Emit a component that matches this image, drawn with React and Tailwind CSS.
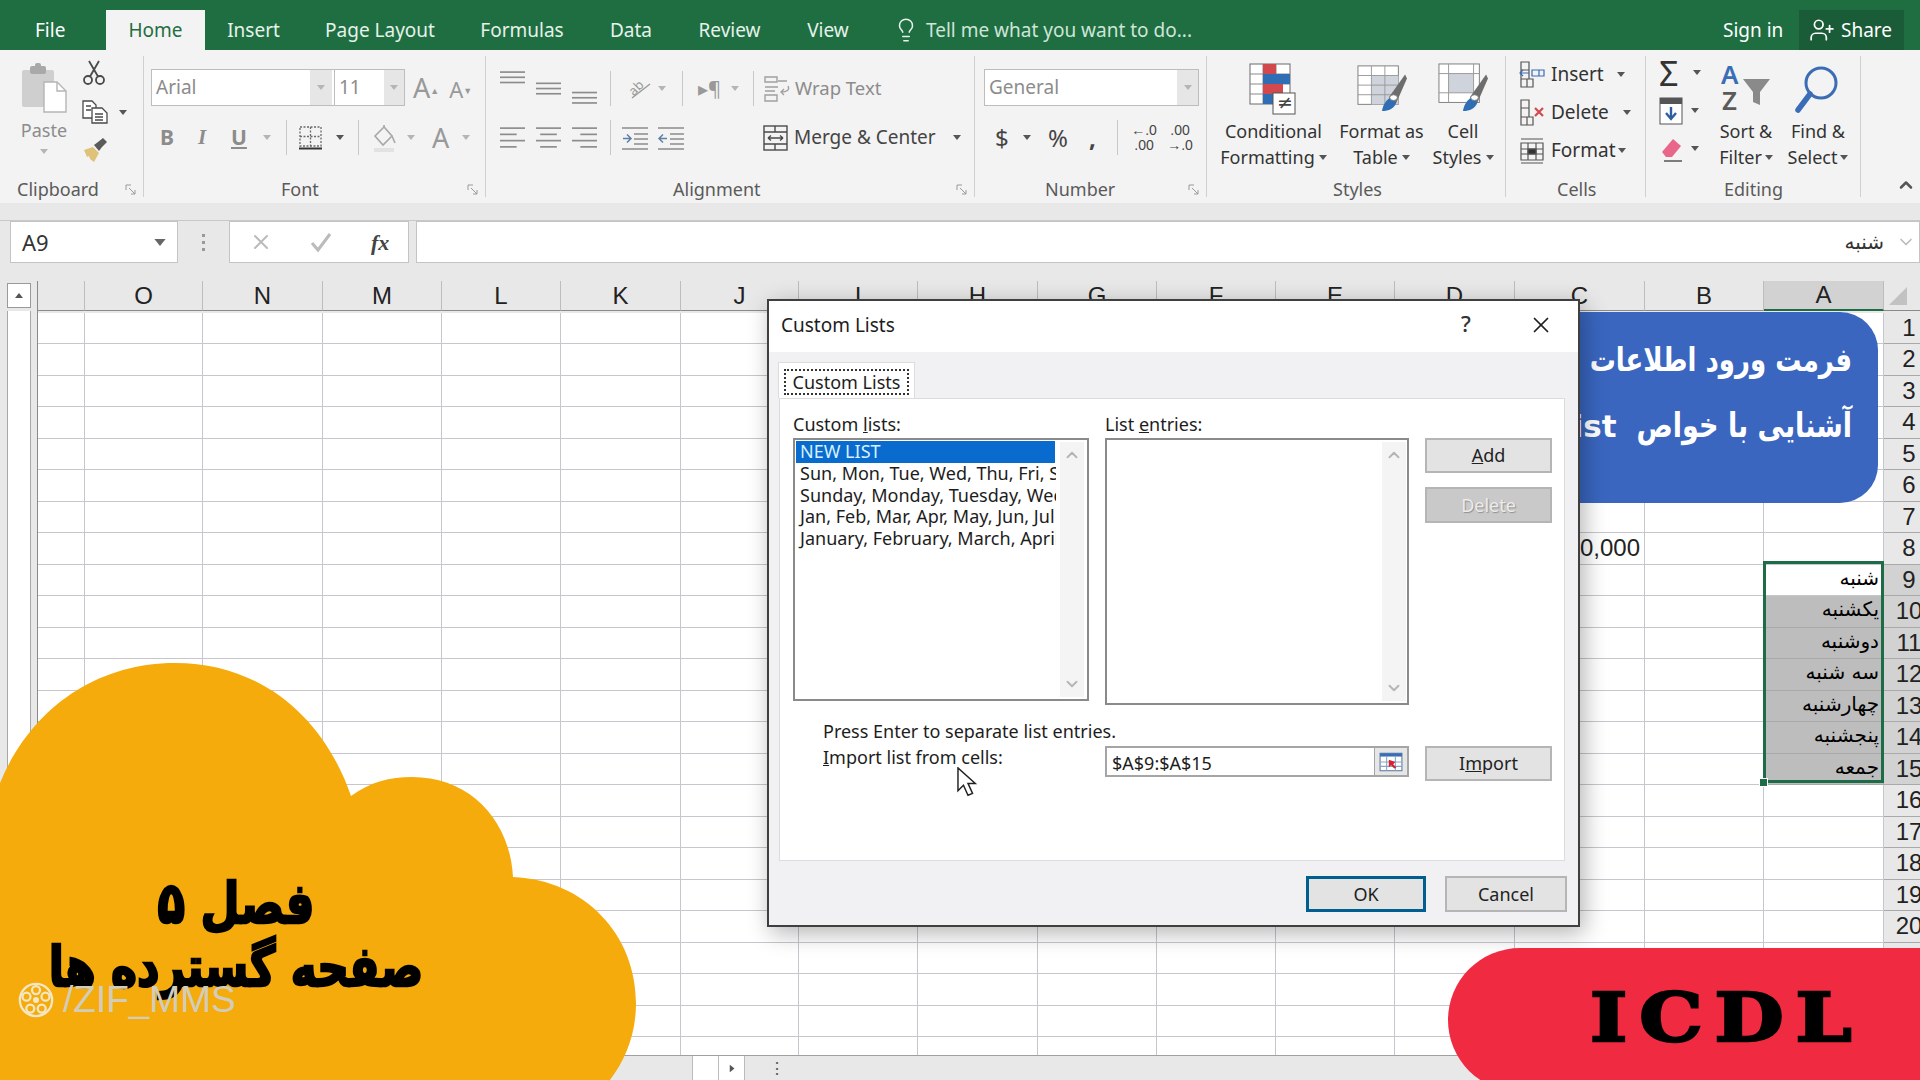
import { ChevronUp, ChevronDown, X, Lightbulb, UserPlus } from "lucide-react";

const columns = ["", "O", "N", "M", "L", "K", "J", "I", "H", "G", "F", "E", "D", "C", "B", "A"];
const days = ["شنبه", "یکشنبه", "دوشنبه", "سه شنبه", "چهارشنبه", "پنجشنبه", "جمعه"];
const rows = Array.from({ length: 24 }, (_, i) => i + 1);
const listItems = [
  "Sun, Mon, Tue, Wed, Thu, Fri, Sat",
  "Sunday, Monday, Tuesday, Wednesday",
  "Jan, Feb, Mar, Apr, May, Jun, Jul",
  "January, February, March, April",
];

const Caret = ({ className = "" }) => (
  <svg viewBox="0 0 8 5" className={`w-[8px] h-[5px] shrink-0 ${className}`}>
    <path d="M0 0h8L4 5z" fill="currentColor" />
  </svg>
);

const Lines = ({ data, className = "", color = "#8c8c8c" }) => (
  <svg viewBox="0 0 24 24" className={`w-[25px] h-[25px] shrink-0 ${className}`} fill="none" stroke={color} strokeWidth="1.6">
    {data.map(([a, b, y], i) => (
      <path key={i} d={`M${a} ${y}H${b}`} />
    ))}
  </svg>
);

const Launcher = () => (
  <svg viewBox="0 0 12 12" className="absolute right-[6px] bottom-[1px] w-[12px] h-[12px]" fill="none" stroke="#9a9a9a">
    <path d="M1 6V1h5M4 4l6 6M6 10h4V6" />
  </svg>
);

const Group = ({ width, label, labelPad, launcher, children }) => (
  <div className={`relative my-[6px] h-[141px] border-r border-[#d0d0d0] shrink-0 ${width}`}>
    {children}
    <div className={`absolute bottom-0 left-0 text-[18px] leading-[16px] text-[#5a5a5a] whitespace-nowrap ${labelPad}`}>{label}</div>
    {launcher && <Launcher />}
  </div>
);

const PasteIcon = () => (
  <svg viewBox="0 0 46 50" className="w-[46px] h-[50px]">
    <rect x="1" y="7" width="32" height="37" rx="2" fill="#cfcfcf" />
    <rect x="9" y="3" width="16" height="8" rx="2" fill="#a9a9a9" />
    <rect x="14" y="0" width="6" height="6" rx="2" fill="#a9a9a9" />
    <path d="M23 19h13l9 9v21H23z" fill="#fff" stroke="#b5b5b5" strokeWidth="1.4" />
    <path d="M36 19v9h9" fill="none" stroke="#b5b5b5" strokeWidth="1.4" />
  </svg>
);

const ScissorsIcon = () => (
  <svg viewBox="0 0 24 26" className="w-[24px] h-[26px]" fill="none" stroke="#4a4a4a" strokeWidth="1.8">
    <circle cx="6" cy="20" r="4" />
    <circle cx="18" cy="20" r="4" />
    <path d="M8 16.5 17 1M16 16.5 7 1" />
  </svg>
);

const CopyIcon = () => (
  <svg viewBox="0 0 26 24" className="w-[26px] h-[24px]" fill="#fff" stroke="#4a4a4a" strokeWidth="1.3">
    <path d="M1 1h9l4 4v13H1z" />
    <path d="M10 8h10l5 5v10H10z" />
    <path d="M4 6h5M4 10h5M13 14h8M13 17h8M13 20h8" />
  </svg>
);

const BrushIcon = () => (
  <svg viewBox="0 0 26 24" className="w-[26px] h-[24px]">
    <path d="M2 12l9-3 6 6-5 9-4-3-1-3-2 1z" fill="#dfc27a" />
    <path d="M12 7l4-3 5-4 4 4-5 5-3 4z" fill="#5a5a5a" />
  </svg>
);

const BorderIcon = () => (
  <svg viewBox="0 0 24 24" className="w-[24px] h-[24px]" fill="none" stroke="#6a6a6a" strokeWidth="1.3" strokeDasharray="2 1.5">
    <rect x="1" y="1" width="21" height="19" />
    <path d="M11.5 1v19M1 10.5h21" />
    <path d="M0 22.5h23" strokeDasharray="none" strokeWidth="2" stroke="#333" />
  </svg>
);

const FillIcon = () => (
  <svg viewBox="0 0 26 28" className="w-[26px] h-[28px]" fill="none" stroke="#a8a8a8" strokeWidth="1.6">
    <path d="M12 3 3 12l8 9 9-9z" />
    <path d="M12 3V1M20 12l3 7" />
    <rect x="2" y="24" width="20" height="4" fill="#e2e2e2" stroke="none" />
  </svg>
);

const OrientationIcon = () => (
  <svg viewBox="0 0 26 26" className="w-[26px] h-[26px]">
    <text x="3" y="15" fontSize="13" fill="#9a9a9a" transform="rotate(-45 12 12)" fontFamily="Noto Sans">ab</text>
    <path d="M6 22 24 8" stroke="#9a9a9a" strokeWidth="1.4" />
  </svg>
);

const IndentIcon = ({ flip }) => (
  <svg viewBox="0 0 28 24" className="w-[28px] h-[24px]" fill="none" stroke="#8c8c8c" strokeWidth="1.5">
    <path d="M1 2h26M13 8h14M13 13h14M13 18h14M1 23h26" />
    <path d={flip ? "M10 12.5H2M6 8.5l-4 4 4 4" : "M2 12.5h8M6 8.5l4 4-4 4"} stroke="#5d7fa8" />
  </svg>
);

const WrapIcon = () => (
  <svg viewBox="0 0 26 26" className="w-[26px] h-[26px]" fill="none" stroke="#a0a0a0" strokeWidth="1.4">
    <path d="M1 1h12v5H1zM1 11h13M1 15h10M1 19h12v6H1zM14 5h9" />
    <path d="M24 10c2 4-1 6-7 6M20 13l-3 3 3 3" />
  </svg>
);

const MergeIcon = () => (
  <svg viewBox="0 0 25 26" className="w-[25px] h-[26px]" fill="none" stroke="#4a4a4a" strokeWidth="1.4">
    <rect x="1" y="1" width="23" height="24" />
    <path d="M1 7h23M1 19h23M12 1v6M12 19v6M5 13h15M5 13l3-2.5M5 13l3 2.5M20 13l-3-2.5M20 13l-3 2.5" />
  </svg>
);

const ConditionalIcon = () => (
  <svg viewBox="0 0 50 52" className="w-[50px] h-[52px]">
    <rect x="1" y="1" width="40" height="40" fill="#fff" stroke="#6a6a6a" />
    <path d="M14 1v40M27 1v40M1 11h40M1 21h40M1 31h40" stroke="#8a8a8a" />
    <rect x="14" y="1" width="13" height="10" fill="#d2494d" />
    <rect x="14" y="11" width="27" height="10" fill="#2f6db5" />
    <rect x="14" y="21" width="20" height="10" fill="#d2494d" />
    <rect x="14" y="31" width="13" height="10" fill="#2f6db5" />
    <rect x="24" y="30" width="22" height="21" fill="#fff" stroke="#555" />
    <text x="28" y="46" fontSize="19" fill="#444" fontFamily="DejaVu Sans">≠</text>
  </svg>
);

const StyleBrush = () => (
  <>
    <path d="M33 36 50 12l2 4-11 25z" fill="#6d6d6d" />
    <path d="M26 50c1-7 5-12 9-14l6 5c-2 6-8 9-15 9z" fill="#2f6db5" />
    <ellipse cx="38" cy="36" rx="4" ry="3" fill="#fff" stroke="#777" />
  </>
);

const TableIcon = () => (
  <svg viewBox="0 0 52 52" className="w-[52px] h-[50px]">
    <rect x="1" y="3" width="42" height="40" fill="#fff" stroke="#7d7d7d" />
    <rect x="15" y="13" width="28" height="30" fill="#cfd3dc" />
    <path d="M15 3v40M29 3v40M1 13h42M1 23h42M1 33h42" stroke="#9a9a9a" />
    <StyleBrush />
  </svg>
);

const CellStylesIcon = () => (
  <svg viewBox="0 0 52 52" className="w-[52px] h-[50px]">
    <rect x="1" y="1" width="42" height="40" fill="#fff" stroke="#7d7d7d" />
    <rect x="11" y="11" width="26" height="20" fill="#cfd3dc" />
    <path d="M11 1v40M37 1v40M1 11h42M1 31h42" stroke="#9a9a9a" />
    <StyleBrush />
  </svg>
);

const CellGrid = ({ children }) => (
  <svg viewBox="0 0 27 27" className="w-[27px] h-[27px] shrink-0" fill="none" stroke="#555" strokeWidth="1.2">
    <path d="M2 1h8v8H2zM2 18h12v8H2zM8 18v8M2 9v9M10 9v9" />
    {children}
  </svg>
);

const SortIcon = () => (
  <svg viewBox="0 0 50 48" className="w-[50px] h-[48px]">
    <text x="0" y="21" fontSize="26" fontWeight="600" fontFamily="Noto Sans" fill="#3a6db5">A</text>
    <text x="1" y="47" fontSize="26" fontWeight="600" fontFamily="Noto Sans" fill="#5a5a5a">Z</text>
    <path d="M22 16h27L39 29v13l-7-3V29z" fill="#8a8a8a" />
  </svg>
);

const FindIcon = () => (
  <svg viewBox="0 0 46 54" className="w-[46px] h-[54px]" fill="none">
    <circle cx="26" cy="20" r="15" stroke="#3a6db5" strokeWidth="3" />
    <path d="M15 31 3 47" stroke="#3a6db5" strokeWidth="5.5" strokeLinecap="round" />
  </svg>
);

const ReelIcon = () => (
  <svg viewBox="0 0 40 40" className="w-[38px] h-[40px] shrink-0" fill="none" stroke="#f3e7c4" strokeWidth="2.4">
    <circle cx="20" cy="20" r="17" />
    <circle cx="20" cy="20" r="2" fill="#f3e7c4" />
    <circle cx="20" cy="9.5" r="4.2" />
    <circle cx="30" cy="16.5" r="4.2" />
    <circle cx="26" cy="29" r="4.2" />
    <circle cx="14" cy="29" r="4.2" />
    <circle cx="10" cy="16.5" r="4.2" />
  </svg>
);

const DialogButton = ({ children, className = "bg-[#e3e3e3] text-[#222]" }) => (
  <div className={`flex items-center justify-center border-2 border-[#b5b5b5] text-[18px] ${className}`}>{children}</div>
);

const ListScroll = ({ className = "" }) => (
  <div className={`w-[24px] self-stretch my-[2px] bg-[#f4f4f4] flex flex-col justify-between items-center py-[4px] text-[#b5b5b5] ${className}`}>
    <ChevronUp size={18} strokeWidth={2.5} />
    <ChevronDown size={18} strokeWidth={2.5} />
  </div>
);

const Ribbon = () => (
  <div className="flex h-[153px] bg-[#f3f3f3] text-[#5a5a5a]">
    <Group width="w-[144px]" label="Clipboard" labelPad="pl-[17px]" launcher>
      <div className="flex pl-[19px] pt-[7px]">
        <div className="flex flex-col items-center w-[50px]">
          <PasteIcon />
          <span className="mt-[5px] text-[18px] leading-[24px] text-[#8c8c8c]">Paste</span>
          <Caret className="mt-[7px] text-[#b5b5b5]" />
        </div>
        <div className="ml-[13px] flex flex-col gap-[14px] -mt-[3px]">
          <ScissorsIcon />
          <div className="flex items-center gap-[11px]">
            <CopyIcon />
            <Caret className="text-[#555]" />
          </div>
          <BrushIcon />
        </div>
      </div>
    </Group>

    <Group width="w-[342px]" label="Font" labelPad="pl-[137px]" launcher>
      <div className="flex items-center pl-[7px] pt-[13px]">
        <div className="flex w-[254px] h-[37px] border border-[#bdbdbd] bg-white text-[19px] text-[#8c8c8c]">
          <div className="w-[158px] pl-[4px] leading-[35px]">Arial</div>
          <div className="w-[22px] bg-[#e6e6e6] flex items-center justify-center text-[#b5b5b5]"><Caret /></div>
          <div className="w-[50px] ml-[2px] pl-[4px] leading-[35px] border-l border-[#bdbdbd]">11</div>
          <div className="flex-1 bg-[#e6e6e6] flex items-center justify-center text-[#b5b5b5]"><Caret /></div>
        </div>
        <span className="ml-[8px] text-[27px] leading-none text-[#999]">A<sup className="text-[9px]">▲</sup></span>
        <span className="ml-[10px] text-[22px] leading-none text-[#999] mt-[3px]">A<sup className="text-[9px]">▼</sup></span>
      </div>
      <div className="flex items-center h-[35px] pl-[16px] mt-[14px] text-[#8c8c8c]">
        <b className="w-[38px] text-[21px]">B</b>
        <i className="w-[33px] text-[21px] font-bold font-['Liberation_Serif']">I</i>
        <u className="w-[32px] text-[21px] font-bold">U</u>
        <Caret className="text-[#b5b5b5]" />
        <div className="w-px h-[35px] bg-[#c8c8c8] ml-[15px]" />
        <div className="ml-[12px]"><BorderIcon /></div>
        <Caret className="ml-[13px] text-[#555]" />
        <div className="w-px h-[35px] bg-[#c8c8c8] ml-[14px]" />
        <div className="ml-[13px]"><FillIcon /></div>
        <Caret className="ml-[9px] text-[#b5b5b5]" />
        <span className="ml-[17px] text-[27px] leading-none text-[#999]">A</span>
        <Caret className="ml-[13px] text-[#b5b5b5]" />
      </div>
    </Group>

    <Group width="w-[489px]" label="Alignment" labelPad="pl-[187px]" launcher>
      <div className="flex items-center h-[50px] pl-[14px] pt-[15px]">
        <Lines className="-mt-[12px]" data={[[0, 24, 2], [0, 24, 7], [0, 24, 12]]} />
        <Lines className="ml-[11px] -mt-[3px]" data={[[0, 24, 8], [0, 24, 13], [0, 24, 18]]} />
        <Lines className="ml-[11px] mt-[6px]" data={[[0, 24, 13], [0, 24, 18], [0, 24, 23]]} />
        <div className="w-px h-[35px] bg-[#c8c8c8] ml-[13px]" />
        <div className="ml-[15px]"><OrientationIcon /></div>
        <Caret className="ml-[6px] text-[#b5b5b5]" />
        <div className="w-px h-[35px] bg-[#c8c8c8] ml-[16px]" />
        <span className="ml-[15px] w-[28px] text-[20px] text-[#999]">▸¶</span>
        <Caret className="ml-[5px] text-[#b5b5b5]" />
        <div className="w-px h-[35px] bg-[#c8c8c8] ml-[14px]" />
        <div className="ml-[10px]"><WrapIcon /></div>
        <span className="ml-[5px] -mt-[2px] text-[18.5px] text-[#8c8c8c]">Wrap Text</span>
      </div>
      <div className="flex items-center h-[35px] pl-[14px] mt-[14px]">
        <Lines data={[[0, 24, 3], [0, 16, 9], [0, 24, 15], [0, 16, 21]]} />
        <Lines className="ml-[11px]" data={[[0, 24, 3], [4, 20, 9], [0, 24, 15], [4, 20, 21]]} />
        <Lines className="ml-[11px]" data={[[0, 24, 3], [8, 24, 9], [0, 24, 15], [8, 24, 21]]} />
        <div className="w-px h-[35px] bg-[#c8c8c8] ml-[13px]" />
        <div className="ml-[10px]"><IndentIcon /></div>
        <div className="ml-[8px]"><IndentIcon flip /></div>
        <div className="ml-[78px]"><MergeIcon /></div>
        <span className="ml-[6px] w-[159px] whitespace-nowrap text-[19px] text-[#444]">Merge &amp; Center</span>
        <Caret className="text-[#555]" />
      </div>
    </Group>

    <Group width="w-[232px]" label="Number" labelPad="pl-[70px]" launcher>
      <div className="pl-[9px] pt-[13px]">
        <div className="flex w-[215px] h-[37px] border border-[#bdbdbd] bg-white text-[19px] text-[#8c8c8c]">
          <div className="flex-1 pl-[4px] leading-[35px]">General</div>
          <div className="w-[21px] bg-[#e6e6e6] flex items-center justify-center text-[#b5b5b5]"><Caret /></div>
        </div>
      </div>
      <div className="flex items-center h-[35px] pl-[20px] mt-[14px] text-[#444]">
        <span className="w-[28px] text-[24px]">$</span>
        <Caret className="text-[#555]" />
        <span className="ml-[17px] w-[41px] text-[24px]">%</span>
        <b className="w-[22px] text-[24px] leading-none">,</b>
        <div className="w-px h-[35px] bg-[#c8c8c8] ml-[6px]" />
        <div className="ml-[12px] w-[28px] text-[14px] leading-[15px] text-center font-['Liberation_Sans'] whitespace-nowrap">←.0<br />.00</div>
        <div className="ml-[8px] w-[28px] text-[14px] leading-[15px] text-center font-['Liberation_Sans'] whitespace-nowrap">.00<br />→.0</div>
      </div>
    </Group>

    <Group width="w-[299px]" label="Styles" labelPad="pl-[126px]">
      <div className="flex pl-[14px] pt-[7px] text-[18px] leading-[26px] text-[#333]">
        <div className="w-[105px] flex flex-col items-center">
          <div className="h-[55px]"><ConditionalIcon /></div>
          <span>Conditional</span>
          <span className="flex items-center gap-[4px]">Formatting<Caret className="text-[#555]" /></span>
        </div>
        <div className="w-[107px] ml-[2px] flex flex-col items-center">
          <div className="h-[55px]"><TableIcon /></div>
          <span className="whitespace-nowrap">Format as</span>
          <span className="flex items-center gap-[4px]">Table<Caret className="text-[#555]" /></span>
        </div>
        <div className="w-[60px] -ml-[2px] flex flex-col items-center">
          <div className="h-[55px]"><CellStylesIcon /></div>
          <span>Cell</span>
          <span className="flex items-center gap-[4px]">Styles<Caret className="text-[#555]" /></span>
        </div>
      </div>
    </Group>

    <Group width="w-[140px]" label="Cells" labelPad="pl-[51px]">
      <div className="flex flex-col gap-[11px] pl-[13px] pt-[5px] text-[19px] text-[#333]">
        <div className="flex items-center h-[27px]">
          <CellGrid><path d="M13 9h12v6H13zM20 9v6M1 12h9M4 9l-3 3 3 3" stroke="#3a6db5" /></CellGrid>
          <span className="ml-[5px] w-[66px]">Insert</span>
          <Caret className="text-[#555]" />
        </div>
        <div className="flex items-center h-[27px]">
          <CellGrid><path d="M16 9l8 8M24 9l-8 8" stroke="#d2494d" strokeWidth="2.2" /></CellGrid>
          <span className="ml-[5px] w-[72px]">Delete</span>
          <Caret className="text-[#555]" />
        </div>
        <div className="flex items-center h-[27px]">
          <svg viewBox="0 0 27 27" className="w-[27px] h-[27px] shrink-0" fill="none" stroke="#555" strokeWidth="1.2">
            <path d="M2 6h22v17H2zM2 12h22M2 17h22M9 6v17M17 6v17M2 26h22M2 2h22" />
            <rect x="9" y="12" width="8" height="5" fill="#333" />
          </svg>
          <span className="ml-[5px] w-[67px]">Format</span>
          <Caret className="text-[#555]" />
        </div>
      </div>
    </Group>

    <Group width="w-[215px]" label="Editing" labelPad="pl-[78px]">
      <div className="flex text-[18px] leading-[26px] text-[#333]">
        <div className="flex flex-col gap-[11px] pl-[13px] pt-[3px] w-[60px]">
          <div className="flex items-center h-[27px]">
            <span className="w-[34px] text-[34px] leading-none text-[#333]">Σ</span>
            <Caret className="text-[#555]" />
          </div>
          <div className="flex items-center h-[27px]">
            <svg viewBox="0 0 24 28" className="w-[24px] h-[28px] shrink-0" fill="none">
              <rect x="1" y="1" width="22" height="26" fill="#fff" stroke="#555" />
              <rect x="1" y="1" width="22" height="6" fill="#555" />
              <path d="M12 10v12M7 16l5 6 5-6" stroke="#2f5f9e" strokeWidth="2.4" />
            </svg>
            <Caret className="ml-[8px] text-[#555]" />
          </div>
          <div className="flex items-center h-[27px]">
            <svg viewBox="0 0 24 26" className="w-[24px] h-[26px] shrink-0">
              <path d="M3 16 14 3l8 7-9 11H7z" fill="#e8668a" />
              <path d="M5 25h18" stroke="#555" strokeWidth="1.5" />
            </svg>
            <Caret className="ml-[8px] text-[#555]" />
          </div>
        </div>
        <div className="ml-[10px] w-[60px] pt-[7px] flex flex-col items-center">
          <div className="h-[55px]"><SortIcon /></div>
          <span className="whitespace-nowrap">Sort &amp;</span>
          <span className="flex items-center gap-[3px]">Filter<Caret className="text-[#555]" /></span>
        </div>
        <div className="ml-[9px] w-[66px] pt-[7px] flex flex-col items-center">
          <div className="h-[55px]"><FindIcon /></div>
          <span className="whitespace-nowrap">Find &amp;</span>
          <span className="flex items-center gap-[3px]">Select<Caret className="text-[#555]" /></span>
        </div>
      </div>
    </Group>

    <div className="flex-1 flex items-end justify-end pb-[8px] pr-[4px] text-[#555]">
      <ChevronUp size={20} strokeWidth={3} />
    </div>
  </div>
);

const Sheet = () => (
  <div className="flex h-[792px] bg-[#e8e8e8] pt-[18px]">
    <div className="w-[37px] shrink-0 flex flex-col">
      <div className="ml-[7px] w-[24px] h-[25px] mt-[2px] bg-white border border-[#9a9a9a] flex items-center justify-center text-[#555]">
        <Caret className="rotate-180" />
      </div>
      <div className="ml-[7px] mt-[3px] w-[24px] flex-1 bg-white border-x border-[#a8a8a8]" />
    </div>
    <div className="grid grid-cols-[47px_118px_120px_119px_119px_120px_118px_119px_120px_119px_119px_119px_120px_130px_119px_120px_50px] auto-rows-[31.5px] content-start overflow-hidden font-['Liberation_Sans'] text-[24px] text-[#222] border-l border-[#8a8a8a]">
      {columns.map((c, i) => (
        <div key={i} className={`h-[30px] flex items-center justify-center border-r border-[#bdbdbd] ${c === "A" ? "bg-[#d2d2d2] border-b-2 border-b-[#1e6b47]" : "bg-[#e8e8e8] border-b border-b-[#8a8a8a]"}`}>
          {c}
        </div>
      ))}
      <div className="h-[30px] bg-[#e8e8e8] border-b border-[#8a8a8a] pl-[5px] pt-[6px]">
        <div className="w-0 h-0 border-l-[18px] border-l-transparent border-b-[18px] border-b-[#c2c2c2]" />
      </div>
      {rows.map((r) => (
        <div key={r} className="contents">
          {columns.map((c, i) => {
            const dayIdx = c === "A" ? r - 9 : -1;
            const day = days[dayIdx];
            const shaded = dayIdx > 0 && dayIdx < 7;
            return (
              <div key={i} className={`overflow-hidden border-r border-b ${shaded ? "bg-[#bdbdbd] border-[#a9a9a9]" : "bg-white border-[#c6c6cc]"}`}>
                {day && (
                  <div dir="rtl" className="pr-[4px] text-[20px] leading-[26px] font-['DejaVu_Sans'] text-black whitespace-nowrap">{day}</div>
                )}
                {c === "C" && r === 8 && <div className="text-right pr-[4px] leading-[30px]">0,000</div>}
              </div>
            );
          })}
          <div className={`flex items-center justify-center border-b border-[#a9a9a9] overflow-hidden ${r >= 9 && r <= 15 ? "bg-[#d2d2d2]" : "bg-[#e8e8e8]"}`}>{r}</div>
        </div>
      ))}
    </div>
  </div>
);

const Dialog = () => (
  <div className="absolute left-[767px] top-[299px] w-[813px] h-[628px] border-2 border-[#3f3f3f] bg-white flex flex-col shadow-[4px_6px_22px_rgba(0,0,0,0.3)] text-[#1d1d1d] text-[18px]">
    <div className="h-[51px] flex items-center pl-[12px] pb-[3px] shrink-0">
      <span className="text-[19px]">Custom Lists</span>
      <span className="ml-[561px] -mt-[3px] w-[20px] text-center text-[22px] font-medium text-[#333]">?</span>
      <X size={26} strokeWidth={1.6} className="ml-[52px]" />
    </div>
    <div className="flex-1 bg-[#f1f1f3] flex flex-col">
      <div className="ml-[9px] mt-[10px] w-[137px] h-[36px] bg-white border border-b-0 border-[#dcdcdc] p-[6px] relative z-10">
        <div className="h-[26px] border-2 border-dotted border-[#333] flex items-center justify-center text-[18px] -mx-[1px]">Custom Lists</div>
      </div>
      <div className="ml-[10px] w-[786px] h-[463px] bg-white border border-[#dcdcdc] pl-[13px] flex flex-col">
        <div className="flex items-start h-[321px] pt-[15px]">
          <div className="w-[296px]">
            <div className="h-[24px] leading-[20px]">Custom <u>l</u>ists:</div>
            <div className="h-[263px] border-2 border-[#8a8a8a] flex bg-white">
              <div className="w-[261px] p-[1px] overflow-hidden whitespace-nowrap leading-[21.5px]">
                <div className="h-[22px] bg-[#0a6bce] text-[#d7f1ff] pl-[4px]">NEW LIST</div>
                {listItems.map((item) => (
                  <div key={item} className="pl-[4px]">{item}</div>
                ))}
              </div>
              <div className="flex-1" />
              <ListScroll className="mr-[3px]" />
            </div>
          </div>
          <div className="ml-[16px] w-[304px]">
            <div className="h-[24px] leading-[20px]">List <u>e</u>ntries:</div>
            <div className="h-[267px] border-2 border-[#8a8a8a] flex justify-end bg-white">
              <ListScroll className="mr-[1px]" />
            </div>
          </div>
          <div className="ml-[16px] w-[127px] pt-[24px] flex flex-col gap-[14px]">
            <DialogButton className="h-[35px] bg-[#e3e3e3] text-[#222]"><span><u>A</u>dd</span></DialogButton>
            <DialogButton className="h-[36px] bg-[#c9c9c9] text-[#ececec] [text-shadow:1px_1px_1px_#8f8f8f]">Delete</DialogButton>
          </div>
        </div>
        <div className="h-[26px] pl-[30px] leading-[22px]">Press Enter to separate list entries.</div>
        <div className="flex items-start">
          <div className="ml-[30px] w-[282px] leading-[22px]"><u>I</u>mport list from cells:</div>
          <div className="w-[304px] h-[31px] flex border-2 border-[#a5a5a5] bg-white">
            <div className="flex-1 pl-[5px] leading-[30px]">$A$9:$A$15</div>
            <div className="w-[33px] bg-[#e6e6e6] border-l border-[#a5a5a5] flex items-center justify-center">
              <svg viewBox="0 0 22 18" className="w-[24px] h-[20px]" fill="none">
                <rect x="1" y="1" width="20" height="16" fill="#fff" stroke="#5d7fa8" />
                <rect x="1" y="1" width="20" height="3" fill="#3a6db5" />
                <path d="M1 9h20M1 13h20M7 4v13M15 4v13" stroke="#8aa4c4" />
                <path d="M9 7l6 2-2 2 3 3-2 1-3-3-2 2z" fill="#d2242f" />
              </svg>
            </div>
          </div>
          <DialogButton className="ml-[16px] w-[127px] h-[35px] bg-[#e3e3e3] text-[#222]"><span>I<u>m</u>port</span></DialogButton>
        </div>
      </div>
      <div className="flex justify-end gap-[19px] pr-[11px] pt-[15px]">
        <div className="w-[120px] h-[36px] border-[3px] border-[#005f8f] bg-[#e3e3e3] flex items-center justify-center">OK</div>
        <DialogButton className="w-[122px] h-[36px] bg-[#e3e3e3] text-[#222]">Cancel</DialogButton>
      </div>
    </div>
  </div>
);

export default function App() {
  return (
    <div className="relative w-[1920px] h-[1080px] overflow-hidden bg-white font-['Noto_Sans',sans-serif]">
      <div className="flex items-center h-[50px] pt-[10px] bg-[#1e6e42] text-[19px] text-[#e6f2ea]">
        <div className="w-[106px] pl-[35px] text-white">File</div>
        <div className="w-[99px] h-[40px] bg-[#f3f3f3] text-[#1e6e42] text-center leading-[40px]">Home</div>
        <div className="w-[97px] text-center">Insert</div>
        <div className="w-[156px] text-center">Page Layout</div>
        <div className="w-[128px] text-center">Formulas</div>
        <div className="w-[90px] text-center">Data</div>
        <div className="w-[107px] text-center">Review</div>
        <div className="w-[90px] text-center">View</div>
        <Lightbulb size={26} strokeWidth={1.4} className="ml-[20px]" />
        <div className="ml-[7px] w-[280px] whitespace-nowrap text-[#cfe5d8]">Tell me what you want to do...</div>
        <div className="ml-[517px] w-[70px] whitespace-nowrap text-white">Sign in</div>
        <div className="ml-[6px] w-[105px] h-[40px] bg-[#1a5c38] flex items-center pl-[10px] gap-[6px] text-white">
          <UserPlus size={26} strokeWidth={1.6} />
          Share
        </div>
      </div>

      <Ribbon />

      <div className="h-[18px] bg-[#e8e8e8] border-b border-[#c8c8c8]" />

      <div className="flex h-[42px] bg-[#e8e8e8] text-[#333]">
        <div className="ml-[10px] w-[168px] bg-white border border-[#c4c4c4] flex items-center pl-[11px] pr-[11px] justify-between text-[22px]">
          A9
          <Caret className="w-[12px] h-[7px] text-[#666]" />
        </div>
        <div className="w-[51px] flex flex-col items-center justify-center gap-[4px]">
          <span className="w-[3px] h-[3px] bg-[#999]" />
          <span className="w-[3px] h-[3px] bg-[#999]" />
          <span className="w-[3px] h-[3px] bg-[#999]" />
        </div>
        <div className="w-[180px] bg-white border border-[#c4c4c4] flex items-center">
          <X size={24} strokeWidth={2} className="ml-[19px] text-[#bbb]" />
          <svg viewBox="0 0 24 24" className="ml-[36px] w-[24px] h-[24px]" fill="none" stroke="#bbb" strokeWidth="3"><path d="M3 13l6 7L21 4" /></svg>
          <span className="ml-[38px] text-[22px] italic font-bold font-['Liberation_Serif'] text-[#444]">fx</span>
        </div>
        <div className="ml-[7px] flex-1 bg-white border border-[#c4c4c4] flex items-center justify-end pr-[35px] relative">
          <span dir="rtl" className="text-[20px] font-['DejaVu_Sans'] text-[#333]">شنبه</span>
          <ChevronDown size={20} strokeWidth={2} className="absolute right-[3px] text-[#bbb]" />
        </div>
      </div>

      <Sheet />

      <div className="flex items-center h-[25px] bg-[#e8e8e8] border-t border-[#a0a0a0] pl-[692px] text-[#555]">
        <div className="w-[27px] h-[25px] bg-white border-x border-[#bbb]" />
        <div className="w-[26px] h-[25px] bg-white border-r border-[#bbb] flex items-center justify-center">
          <Caret className="-rotate-90" />
        </div>
        <span className="ml-[24px] text-[16px] leading-none">⋮</span>
      </div>

      {/* blue callout on the sheet */}
      <div className="absolute left-[1480px] top-[312px] w-[398px] h-[191px] rounded-[38px] bg-[#3a66c0] flex flex-col items-end pr-[26px] pt-[10px] text-white font-bold font-['DejaVu_Sans'] text-[26px]">
        <div dir="rtl" className="h-[81px] leading-[60px] whitespace-nowrap scale-y-125 origin-top">فرمت ورود اطلاعات</div>
        <div className="flex items-center gap-[20px] whitespace-nowrap">
          <span className="text-[31px]">List</span>
          <span dir="rtl" className="text-[27px] scale-y-125">آشنایی با خواص</span>
        </div>
      </div>

      {/* selected range */}
      <div className="absolute left-[1763px] top-[561px] w-[121px] h-[222px] border-[3px] border-[#1e6b47]" />
      <div className="absolute left-[1759px] top-[778px] w-[9px] h-[9px] bg-[#1e6b47] border border-white" />

      <Dialog />

      <svg viewBox="0 0 24 34" className="absolute left-[957px] top-[767px] w-[22px] h-[31px]">
        <path d="M1 1v25l6-6 5 11 5-2-5-11h8z" fill="#fff" stroke="#222" strokeWidth="1.6" />
      </svg>

      {/* cloud */}
      <svg viewBox="0 0 640 420" className="absolute left-0 top-[660px] w-[640px] h-[420px]">
        <path d="M0 123C30 50 95 3 175 3c88 0 150 57 176 133 19-14 39-19 61-19 58 0 98 43 101 100 72 3 123 58 123 126 0 32-11 57-26 77H0z" fill="#f5ab0c" />
      </svg>
      <div className="absolute left-0 top-[871px] w-[472px] flex flex-col items-center font-['DejaVu_Sans'] font-bold text-black [-webkit-text-stroke:2px_black]">
        <div dir="rtl" className="text-[45px] leading-[66px] whitespace-nowrap scale-y-125">فصل ۵</div>
        <div dir="rtl" className="text-[44px] leading-[60px] whitespace-nowrap scale-y-125">صفحه گسترده ها</div>
      </div>
      <div className="absolute left-[17px] top-[972px] flex items-center gap-[8px] font-['Liberation_Sans'] text-[37px] text-[#d2cdba]">
        <ReelIcon />
        /ZIF_MMS
      </div>

      {/* red badge */}
      <div className="absolute left-[1448px] top-[948px] w-[480px] h-[144px] rounded-l-[72px] bg-[#ef2a41] flex items-center pl-[142px]">
        <span className="font-['DejaVu_Serif'] font-bold text-[67px] leading-none tracking-[10px] text-black [-webkit-text-stroke:2.5px_black] -mt-[6px] scale-x-[1.19] origin-left">ICDL</span>
      </div>
    </div>
  );
}
